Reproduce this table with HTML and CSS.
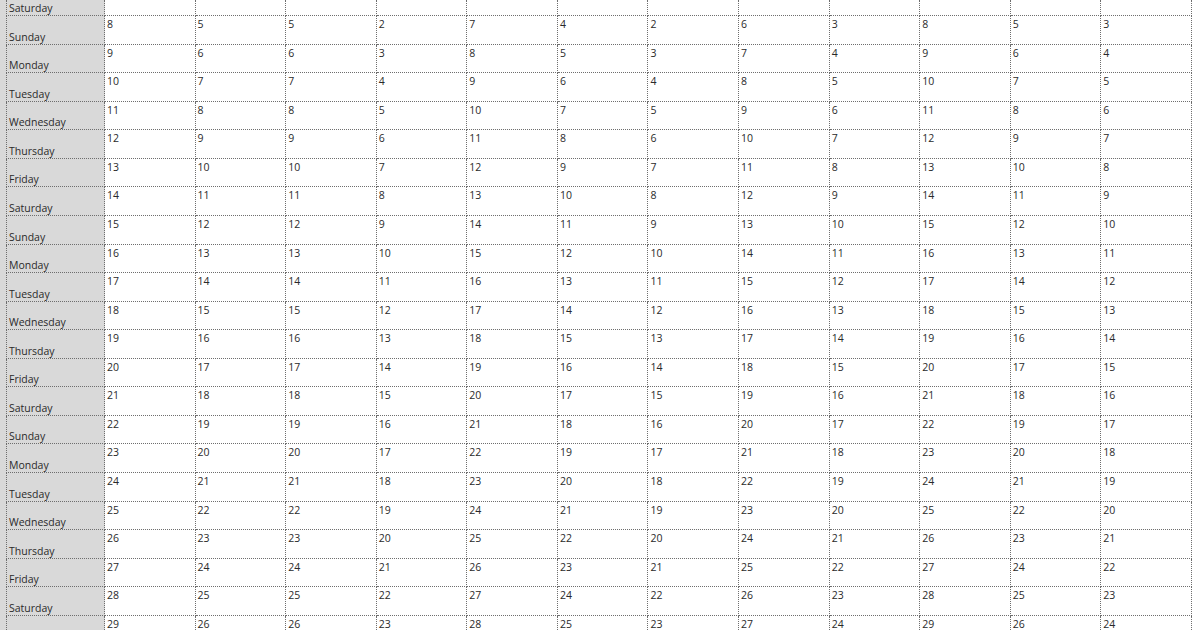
FILE: index.html
```html
<!DOCTYPE html>
<html>
<head>
<meta charset="utf-8">
<link rel="stylesheet" href="styles.css">
</head>
<body>
<div class="sheet">
<div class="lab first">Saturday</div><div class="c first"></div><div class="c first"></div><div class="c first"></div><div class="c first"></div><div class="c first"></div><div class="c first"></div><div class="c first"></div><div class="c first"></div><div class="c first"></div><div class="c first"></div><div class="c first"></div><div class="c first"></div>
<div class="lab">Sunday</div><div class="c">8</div><div class="c">5</div><div class="c">5</div><div class="c">2</div><div class="c">7</div><div class="c">4</div><div class="c">2</div><div class="c">6</div><div class="c">3</div><div class="c">8</div><div class="c">5</div><div class="c">3</div>
<div class="lab">Monday</div><div class="c">9</div><div class="c">6</div><div class="c">6</div><div class="c">3</div><div class="c">8</div><div class="c">5</div><div class="c">3</div><div class="c">7</div><div class="c">4</div><div class="c">9</div><div class="c">6</div><div class="c">4</div>
<div class="lab">Tuesday</div><div class="c">10</div><div class="c">7</div><div class="c">7</div><div class="c">4</div><div class="c">9</div><div class="c">6</div><div class="c">4</div><div class="c">8</div><div class="c">5</div><div class="c">10</div><div class="c">7</div><div class="c">5</div>
<div class="lab">Wednesday</div><div class="c">11</div><div class="c">8</div><div class="c">8</div><div class="c">5</div><div class="c">10</div><div class="c">7</div><div class="c">5</div><div class="c">9</div><div class="c">6</div><div class="c">11</div><div class="c">8</div><div class="c">6</div>
<div class="lab">Thursday</div><div class="c">12</div><div class="c">9</div><div class="c">9</div><div class="c">6</div><div class="c">11</div><div class="c">8</div><div class="c">6</div><div class="c">10</div><div class="c">7</div><div class="c">12</div><div class="c">9</div><div class="c">7</div>
<div class="lab">Friday</div><div class="c">13</div><div class="c">10</div><div class="c">10</div><div class="c">7</div><div class="c">12</div><div class="c">9</div><div class="c">7</div><div class="c">11</div><div class="c">8</div><div class="c">13</div><div class="c">10</div><div class="c">8</div>
<div class="lab">Saturday</div><div class="c">14</div><div class="c">11</div><div class="c">11</div><div class="c">8</div><div class="c">13</div><div class="c">10</div><div class="c">8</div><div class="c">12</div><div class="c">9</div><div class="c">14</div><div class="c">11</div><div class="c">9</div>
<div class="lab">Sunday</div><div class="c">15</div><div class="c">12</div><div class="c">12</div><div class="c">9</div><div class="c">14</div><div class="c">11</div><div class="c">9</div><div class="c">13</div><div class="c">10</div><div class="c">15</div><div class="c">12</div><div class="c">10</div>
<div class="lab">Monday</div><div class="c">16</div><div class="c">13</div><div class="c">13</div><div class="c">10</div><div class="c">15</div><div class="c">12</div><div class="c">10</div><div class="c">14</div><div class="c">11</div><div class="c">16</div><div class="c">13</div><div class="c">11</div>
<div class="lab">Tuesday</div><div class="c">17</div><div class="c">14</div><div class="c">14</div><div class="c">11</div><div class="c">16</div><div class="c">13</div><div class="c">11</div><div class="c">15</div><div class="c">12</div><div class="c">17</div><div class="c">14</div><div class="c">12</div>
<div class="lab">Wednesday</div><div class="c">18</div><div class="c">15</div><div class="c">15</div><div class="c">12</div><div class="c">17</div><div class="c">14</div><div class="c">12</div><div class="c">16</div><div class="c">13</div><div class="c">18</div><div class="c">15</div><div class="c">13</div>
<div class="lab">Thursday</div><div class="c">19</div><div class="c">16</div><div class="c">16</div><div class="c">13</div><div class="c">18</div><div class="c">15</div><div class="c">13</div><div class="c">17</div><div class="c">14</div><div class="c">19</div><div class="c">16</div><div class="c">14</div>
<div class="lab">Friday</div><div class="c">20</div><div class="c">17</div><div class="c">17</div><div class="c">14</div><div class="c">19</div><div class="c">16</div><div class="c">14</div><div class="c">18</div><div class="c">15</div><div class="c">20</div><div class="c">17</div><div class="c">15</div>
<div class="lab">Saturday</div><div class="c">21</div><div class="c">18</div><div class="c">18</div><div class="c">15</div><div class="c">20</div><div class="c">17</div><div class="c">15</div><div class="c">19</div><div class="c">16</div><div class="c">21</div><div class="c">18</div><div class="c">16</div>
<div class="lab">Sunday</div><div class="c">22</div><div class="c">19</div><div class="c">19</div><div class="c">16</div><div class="c">21</div><div class="c">18</div><div class="c">16</div><div class="c">20</div><div class="c">17</div><div class="c">22</div><div class="c">19</div><div class="c">17</div>
<div class="lab">Monday</div><div class="c">23</div><div class="c">20</div><div class="c">20</div><div class="c">17</div><div class="c">22</div><div class="c">19</div><div class="c">17</div><div class="c">21</div><div class="c">18</div><div class="c">23</div><div class="c">20</div><div class="c">18</div>
<div class="lab">Tuesday</div><div class="c">24</div><div class="c">21</div><div class="c">21</div><div class="c">18</div><div class="c">23</div><div class="c">20</div><div class="c">18</div><div class="c">22</div><div class="c">19</div><div class="c">24</div><div class="c">21</div><div class="c">19</div>
<div class="lab">Wednesday</div><div class="c">25</div><div class="c">22</div><div class="c">22</div><div class="c">19</div><div class="c">24</div><div class="c">21</div><div class="c">19</div><div class="c">23</div><div class="c">20</div><div class="c">25</div><div class="c">22</div><div class="c">20</div>
<div class="lab">Thursday</div><div class="c">26</div><div class="c">23</div><div class="c">23</div><div class="c">20</div><div class="c">25</div><div class="c">22</div><div class="c">20</div><div class="c">24</div><div class="c">21</div><div class="c">26</div><div class="c">23</div><div class="c">21</div>
<div class="lab">Friday</div><div class="c">27</div><div class="c">24</div><div class="c">24</div><div class="c">21</div><div class="c">26</div><div class="c">23</div><div class="c">21</div><div class="c">25</div><div class="c">22</div><div class="c">27</div><div class="c">24</div><div class="c">22</div>
<div class="lab">Saturday</div><div class="c">28</div><div class="c">25</div><div class="c">25</div><div class="c">22</div><div class="c">27</div><div class="c">24</div><div class="c">22</div><div class="c">26</div><div class="c">23</div><div class="c">28</div><div class="c">25</div><div class="c">23</div>
<div class="lab"></div><div class="c">29</div><div class="c">26</div><div class="c">26</div><div class="c">23</div><div class="c">28</div><div class="c">25</div><div class="c">23</div><div class="c">27</div><div class="c">24</div><div class="c">29</div><div class="c">26</div><div class="c">24</div>
</div>
</body>
</html>
```

FILE: styles.css
```css
html, body {
  margin: 0;
  padding: 0;
  background: #ffffff;
  overflow: hidden;
}

.sheet {
  display: grid;
  grid-template-columns: 99px repeat(12, 90.58px);
  grid-template-rows: 16px;
  grid-auto-rows: 28.57px;
  border-left: 6px solid #d9d9d9;
  width: max-content;
  font-family: "Open Sans", "DejaVu Sans", sans-serif;
  font-size: 10.5px;
  line-height: 13px;
  color: #2a2a2a;
}

.lab,
.c {
  box-sizing: border-box;
  border-right: 1px dotted #6e6e6e;
  border-bottom: 1px dotted #6e6e6e;
  overflow: hidden;
  white-space: nowrap;
}

.lab {
  background: #d9d9d9;
  border-left: 1px dotted #6e6e6e;
  display: flex;
  align-items: flex-end;
  padding: 0 0 0 2px;
}

.c {
  padding: 2px 0 0 2px;
  background: #ffffff;
}
```
